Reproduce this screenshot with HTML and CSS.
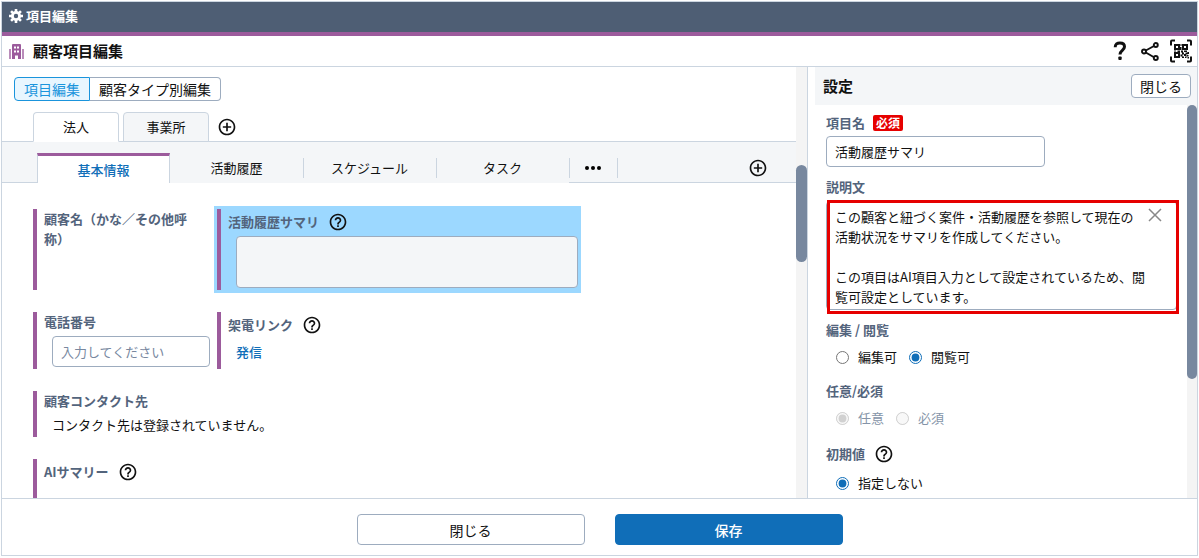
FILE: index.html
```
<!DOCTYPE html>
<html lang="ja">
<head>
    <meta charset="UTF-8">
    <meta name="viewport" content="width=device-width, initial-scale=1.0">
    <title>顧客項目編集</title>
    <link rel="stylesheet" href="styles.css">
</head>
<body>
    <!-- 共通アイコン -->
    <svg class="icon-defs" aria-hidden="true">
        <symbol id="icon-help" viewBox="0 0 24 24">
            <path d="M11 18h2v-2h-2v2zm1-16C6.48 2 2 6.48 2 12s4.48 10 10 10 10-4.48 10-10S17.52 2 12 2zm0 18c-4.41 0-8-3.590-8-8s3.590-8 8-8 8 3.590 8 8-3.590 8-8 8zm0-14c-2.210 0-4 1.790-4 4h2c0-1.100.900-2 2-2s2 .900 2 2c0 2-3 1.750-3 5h2c0-2.250 3-2.500 3-5 0-2.210-1.790-4-4-4z"/>
        </symbol>
        <symbol id="icon-plus" viewBox="0 0 24 24">
            <path d="M13 7h-2v4H7v2h4v4h2v-4h4v-2h-4V7zm-1-5C6.480 2 2 6.480 2 12s4.480 10 10 10 10-4.480 10-10S17.520 2 12 2zm0 18c-4.410 0-8-3.590-8-8s3.590-8 8-8 8 3.590 8 8-3.590 8-8 8z"/>
        </symbol>
    </svg>

    <div class="app">
        <header class="app-header">
            <svg class="icon-gear" viewBox="0 0 14 14" fill="none" stroke="white">
                <circle cx="7" cy="7" r="3.600" stroke-width="2.800"/>
                <path d="M7 0v3M7 11v3M0 7h3M11 7h3M2.050 2.050l2 2M9.950 9.950l2 2M2.050 11.950l2-2M9.950 4.050l2-2" stroke-width="2.600"/>
            </svg>
            <span>項目編集</span>
        </header>

        <div class="title-bar">
            <svg class="icon-building" viewBox="0 0 15 15">
                <path fill-rule="evenodd" d="M3 1q0-1 1-1h7q1 0 1 1v14H9v-3.500H6V15H3zM5 2.500v2h2v-2zm3 0v2h2v-2zM5 6.500v2h2v-2zm3 0v2h2v-2z"/>
                <path opacity=".7" d="M0 5h2v10H0zM13 5h2v10h-2z"/>
            </svg>
            <h1>顧客項目編集</h1>
            <div class="title-actions">
                <button class="icon-button" aria-label="ヘルプ">
                    <svg width="14" height="20" viewBox="0 0 14 20">
                        <path d="M2.200 6.200C2.200 3.200 4.200 1.900 6.900 1.900c2.800 0 4.600 1.500 4.600 3.900 0 3.500-4.500 3.700-4.500 7.600" fill="none" stroke="#111" stroke-width="3"/>
                        <rect x="5.300" y="15.500" width="3.400" height="3.400" rx="1" fill="#111"/>
                    </svg>
                </button>
                <button class="icon-button" aria-label="共有">
                    <svg width="18" height="19" viewBox="0 0 18 19" fill="none" stroke="#111" stroke-width="1.900">
                        <path d="M4.800 8.500L13 4M4.800 10.500l8.200 4.700"/>
                        <circle cx="3" cy="9.500" r="2"/>
                        <circle cx="14.800" cy="3" r="2"/>
                        <circle cx="14.800" cy="16" r="2"/>
                    </svg>
                </button>
                <button class="icon-button" aria-label="QRコード">
                    <svg width="24" height="24" viewBox="0 0 24 24" fill="none" stroke="#111" stroke-width="2">
                        <path d="M2 6.500V2.500Q2 1.500 3 1.500H6M18 1.500h3q1 0 1 1v4M22 17.500v4q0 1-1 1h-3M6 22.500H3q-1 0-1-1v-4"/>
                        <path d="M6 6h4v4H6zM14 6h4v4h-4zM6 14h4v4H6z"/>
                        <path fill="#111" stroke="none" d="M11.500 5h1v2h-1zM11 8h1.500v3H11zM5 11.500h2v1H5zM8.500 11.500H11V13H8.500zM12 11.500h2v2h-2zM15 11.500h3v1.500h-3zM18.500 13h1.500v2h-1.500zM13 13.500h2v2h-2zM16.500 13.500h2v2h-2zM11.500 15.500h2v2h-2zM15 15h2v2h-2zM17.500 16h2v1.500h-2zM13 17.500h2V19h-2zM16 17.500h1.500v1.500H16zM18.500 18h1.500v1.500h-1.500z"/>
                    </svg>
                </button>
            </div>
        </div>

        <div class="content">
            <!-- 項目編集エリア -->
            <main class="editor">
                <div class="mode-switch">
                    <button class="mode-button active">項目編集</button>
                    <button class="mode-button">顧客タイプ別編集</button>
                </div>

                <div class="type-tabs">
                    <button class="type-tab active">法人</button>
                    <button class="type-tab">事業所</button>
                    <button class="icon-button" aria-label="タブを追加"><svg class="icon"><use href="#icon-plus"/></svg></button>
                </div>

                <div class="sub-tabs">
                    <button class="sub-tab active">基本情報</button>
                    <button class="sub-tab">活動履歴</button>
                    <button class="sub-tab">スケジュール</button>
                    <button class="sub-tab">タスク</button>
                    <div class="sub-tabs-rest">
                        <button class="sub-tab more" aria-label="その他">
                            <svg width="16" height="4" viewBox="0 0 16 4"><circle cx="2" cy="2" r="2"/><circle cx="8" cy="2" r="2"/><circle cx="14" cy="2" r="2"/></svg>
                        </button>
                        <button class="icon-button" aria-label="サブタブを追加"><svg class="icon"><use href="#icon-plus"/></svg></button>
                    </div>
                </div>

                <div class="fields">
                    <div class="field">
                        <div class="field-body">
                            <div class="field-label">顧客名（かな／その他呼称）</div>
                        </div>
                    </div>
                    <div class="field selected">
                        <div class="field-body">
                            <label class="field-label with-help" for="summary">活動履歴サマリ <svg class="icon"><use href="#icon-help"/></svg></label>
                            <textarea id="summary" class="summary-input" readonly></textarea>
                        </div>
                    </div>
                    <div class="field">
                        <div class="field-body">
                            <label class="field-label" for="tel">電話番号</label>
                            <input id="tel" class="text-input" type="text" placeholder="入力してください">
                        </div>
                    </div>
                    <div class="field">
                        <div class="field-body">
                            <div class="field-label with-help">架電リンク <svg class="icon"><use href="#icon-help"/></svg></div>
                            <a class="field-value" href="#">発信</a>
                        </div>
                    </div>
                    <div class="field wide">
                        <div class="field-body">
                            <div class="field-label">顧客コンタクト先</div>
                            <div class="field-value">コンタクト先は登録されていません。</div>
                        </div>
                    </div>
                    <div class="field wide tall">
                        <div class="field-body">
                            <div class="field-label with-help">AIサマリー <svg class="icon"><use href="#icon-help"/></svg></div>
                        </div>
                    </div>
                </div>
            </main>
            <div class="scrollbar editor-scroll"><div class="thumb"></div></div>

            <!-- 設定パネル -->
            <aside class="settings">
                <div class="settings-header">
                    <h2>設定</h2>
                    <button class="close-button">閉じる</button>
                </div>
                <div class="settings-main">
                    <form class="settings-form">
                        <div class="setting">
                            <label class="setting-label" for="item-name">項目名 <span class="badge">必須</span></label>
                            <input id="item-name" class="text-input name-input" type="text" value="活動履歴サマリ">
                        </div>
                        <div class="setting">
                            <label class="setting-label" for="description">説明文</label>
                            <div class="description-box">
                                <textarea id="description" class="description-input">この顧客と紐づく案件・活動履歴を参照して現在の
活動状況をサマリを作成してください。

この項目はAI項目入力として設定されているため、閲
覧可設定としています。</textarea>
                                <button type="button" class="clear-button" aria-label="クリア">
                                    <svg width="14" height="14" viewBox="0 0 14 14"><path d="M1 1l12 12M13 1L1 13" stroke="#888" stroke-width="1.500"/></svg>
                                </button>
                                <div class="highlight-frame"></div>
                            </div>
                        </div>
                        <div class="setting">
                            <div class="setting-label">編集 / 閲覧</div>
                            <div class="radio-group">
                                <label><input type="radio" name="mode">編集可</label>
                                <label><input type="radio" name="mode" checked>閲覧可</label>
                            </div>
                        </div>
                        <div class="setting">
                            <div class="setting-label">任意/必須</div>
                            <div class="radio-group disabled">
                                <label><input type="radio" name="required" checked disabled>任意</label>
                                <label><input type="radio" name="required" disabled>必須</label>
                            </div>
                        </div>
                        <div class="setting">
                            <div class="setting-label with-help">初期値 <svg class="icon"><use href="#icon-help"/></svg></div>
                            <div class="radio-group">
                                <label><input type="radio" name="default" checked>指定しない</label>
                            </div>
                        </div>
                    </form>
                    <div class="scrollbar settings-scroll"><div class="thumb"></div></div>
                </div>
            </aside>
        </div>

        <footer class="app-footer">
            <button class="footer-button">閉じる</button>
            <button class="footer-button primary">保存</button>
        </footer>
    </div>
</body>
</html>
```
FILE: styles.css
```
:root {
    --header-color: #4e5e74;
    --accent-color: #9c5b9c;
    --primary-color: #106eb8;
    --label-color: #53647c;
    --line-color: #cbd5e0;
    --input-border: #9dacbf;
    --panel-color: #f4f6f8;
    --thumb-color: #78889f;
    --track-color: #f4f4f4;
}

* {
    box-sizing: border-box;
}

body {
    display: flex;
    height: 100vh;
    margin: 0;
    padding: 1px 1px 2px;
    background: white;
    color: #111;
    font-family: "Noto Sans CJK JP", "Noto Sans", sans-serif;
    font-size: 13px;
    line-height: 20px;
}

button,
input,
textarea {
    font: inherit;
    color: inherit;
}

button {
    padding: 0;
    cursor: pointer;
}

h1,
h2 {
    margin: 0;
    font-size: 15px;
    line-height: 20px;
}

.icon-defs {
    position: absolute;
    width: 0;
    height: 0;
}

.icon {
    width: 20px;
    height: 20px;
    fill: #111;
    flex: none;
}

.icon-button {
    display: flex;
    border: none;
    background: none;
}

.app {
    flex: 1;
    display: flex;
    flex-direction: column;
    min-width: 0;
    border: 1px solid var(--line-color);
}

/* ヘッダー */
.app-header {
    display: flex;
    align-items: center;
    gap: 3px;
    padding: 4px 7px 6px;
    background: var(--header-color);
    border-bottom: 4px solid var(--accent-color);
    color: white;
    font-weight: bold;
}

.icon-gear {
    width: 14px;
    height: 14px;
}

.title-bar {
    display: flex;
    align-items: center;
    height: 31px;
    padding: 0 4px 0 7px;
    border-bottom: 1px solid var(--line-color);
}

.icon-building {
    width: 15px;
    height: 15px;
    margin-right: 9px;
    fill: var(--accent-color);
}

.title-actions {
    display: flex;
    align-items: center;
    gap: 10px;
    margin-left: auto;
}

.title-actions .icon-button:first-child {
    margin-right: 4px;
}

/* コンテンツ */
.content {
    flex: 1;
    display: flex;
    min-height: 0;
}

.editor {
    flex: 1;
    min-width: 0;
    overflow: hidden;
}

.scrollbar {
    flex: none;
    background: var(--track-color);
}

.thumb {
    background: var(--thumb-color);
    border-radius: 6px;
}

.editor-scroll {
    width: 11px;
    padding-top: 98px;
}

.editor-scroll .thumb {
    height: 97px;
}

.mode-switch {
    display: flex;
    padding: 10px 12px 11px;
}

.mode-button {
    height: 24px;
    padding: 0 9px;
    border: 1px solid var(--input-border);
    border-left: none;
    border-radius: 0 4px 4px 0;
    background: white;
    font-size: 14px;
    line-height: 20px;
}

.mode-button.active {
    border: 1px solid #1a94dc;
    border-radius: 4px 0 0 4px;
    background: #e8f6ff;
    color: #1a94dc;
}

.type-tabs {
    display: flex;
    align-items: center;
    gap: 4px;
    padding: 0 31px;
    border-bottom: 1px solid var(--line-color);
}

.type-tab {
    width: 86px;
    height: 30px;
    margin-bottom: -1px;
    border: 1px solid var(--line-color);
    border-radius: 4px 4px 0 0;
    background: var(--panel-color);
}

.type-tab.active {
    border-bottom-color: white;
    background: white;
}

.type-tabs .icon-button {
    margin-left: 4px;
}

.sub-tabs {
    display: flex;
    align-items: flex-end;
    padding-top: 11px;
    background: var(--panel-color);
}

.sub-tabs::before {
    content: "";
    width: 35px;
    border-bottom: 1px solid var(--line-color);
}

.sub-tab {
    position: relative;
    width: 133px;
    height: 30px;
    border: none;
    background: none;
}

.sub-tab::after {
    content: "";
    position: absolute;
    top: 5px;
    right: -1px;
    height: 20px;
    border-right: 1px solid var(--line-color);
}

.sub-tab.active {
    border: 1px solid var(--line-color);
    border-width: 3px 1px 0;
    border-top-color: var(--accent-color);
    background: white;
    color: var(--primary-color);
    font-weight: 500;
}

.sub-tab.active::after {
    display: none;
}

.sub-tabs-rest {
    flex: 1;
    display: flex;
    align-items: center;
    justify-content: space-between;
    height: 30px;
    padding-right: 28px;
    border-bottom: 1px solid var(--line-color);
}

.sub-tab.more {
    display: flex;
    align-items: center;
    justify-content: center;
    width: 48px;
}

/* 項目一覧 */
.fields {
    display: grid;
    grid-template-columns: 184px 367px;
    row-gap: 16px;
    padding: 23px 0 0 28px;
}

.field {
    display: flex;
    padding: 3px;
}

.field.wide {
    grid-column: 1 / -1;
}

.field.selected {
    background: #9cd8ff;
}

.field-body {
    flex: 1;
    min-width: 0;
    padding-left: 7px;
    border-left: 4px solid var(--accent-color);
}

.field.tall .field-body {
    min-height: 80px;
}

.field-label {
    display: block;
    padding-right: 16px;
    color: var(--label-color);
    font-weight: bold;
}

.with-help {
    display: flex;
    align-items: center;
    gap: 9px;
    height: 26px;
}

.field-value {
    display: block;
    padding: 4px 0 2px 8px;
}

a.field-value {
    color: var(--primary-color);
    text-decoration: none;
    font-weight: 500;
}

.text-input {
    display: block;
    height: 31px;
    padding: 0 8px;
    border: 1px solid var(--input-border);
    border-radius: 4px;
    background: white;
}

.text-input::placeholder {
    color: #78889f;
}

.field .text-input {
    width: 158px;
    margin: 4px 0 2px 8px;
}

.summary-input {
    display: block;
    width: 342px;
    height: 52px;
    margin: 1px 0 2px 8px;
    border: 1px solid var(--input-border);
    border-radius: 4px;
    background: var(--panel-color);
    resize: none;
}

/* 設定パネル */
.settings {
    flex: none;
    display: flex;
    flex-direction: column;
    width: 390px;
    border: 1px solid var(--line-color);
    border-width: 0 0 0 1px;
}

.settings-header {
    display: flex;
    align-items: center;
    justify-content: space-between;
    height: 38px;
    margin-left: 7px;
    padding: 0 6px 0 8px;
    background: var(--panel-color);
}

.close-button {
    height: 24px;
    padding: 0 8px;
    border: 1px solid var(--input-border);
    border-radius: 4px;
    background: white;
    font-size: 14px;
    line-height: 20px;
}

.settings-main {
    flex: 1;
    display: flex;
    min-height: 0;
}

.settings-form {
    flex: 1;
    display: flex;
    flex-direction: column;
    gap: 10px;
    padding: 8px 10px 0 18px;
    overflow: hidden;
}

.setting-label {
    display: flex;
    align-items: center;
    color: var(--label-color);
    font-weight: bold;
}

.setting-label.with-help {
    height: 24px;
}

.badge {
    margin-left: 8px;
    padding: 0 3px;
    border-radius: 2px;
    background: #e60000;
    color: white;
    font-size: 12px;
    line-height: 16px;
}

.name-input {
    width: 219px;
    margin-top: 3px;
}

.description-box {
    position: relative;
    margin-top: 4px;
}

.description-input {
    display: block;
    width: 100%;
    height: 109px;
    padding: 5px 8px;
    border: 1px solid var(--input-border);
    border-radius: 4px;
    resize: none;
    overflow: hidden;
}

.clear-button {
    position: absolute;
    top: 7px;
    right: 15px;
    display: flex;
    border: none;
    background: none;
}

.highlight-frame {
    position: absolute;
    inset: -1px -2px -4px 1px;
    border: 3px solid #e60000;
    pointer-events: none;
}

.radio-group {
    display: flex;
    gap: 12px;
    padding: 7px 0 4px 10px;
}

.radio-group label {
    display: flex;
    align-items: center;
}

.radio-group input {
    width: 13px;
    height: 13px;
    margin: 0 9px 0 0;
    accent-color: var(--primary-color);
}

.radio-group.disabled {
    color: #8594a8;
}

.settings-scroll {
    width: 10px;
}

.settings-scroll .thumb {
    height: 274px;
}

/* フッター */
.app-footer {
    display: flex;
    justify-content: center;
    gap: 30px;
    padding: 15px 0 10px;
    border-top: 1px solid var(--line-color);
}

.footer-button {
    width: 228px;
    height: 31px;
    border: 1px solid var(--input-border);
    border-radius: 4px;
    background: white;
    font-size: 14px;
    line-height: 20px;
}

.footer-button.primary {
    border-color: var(--primary-color);
    background: var(--primary-color);
    color: white;
    font-weight: 500;
}
```
